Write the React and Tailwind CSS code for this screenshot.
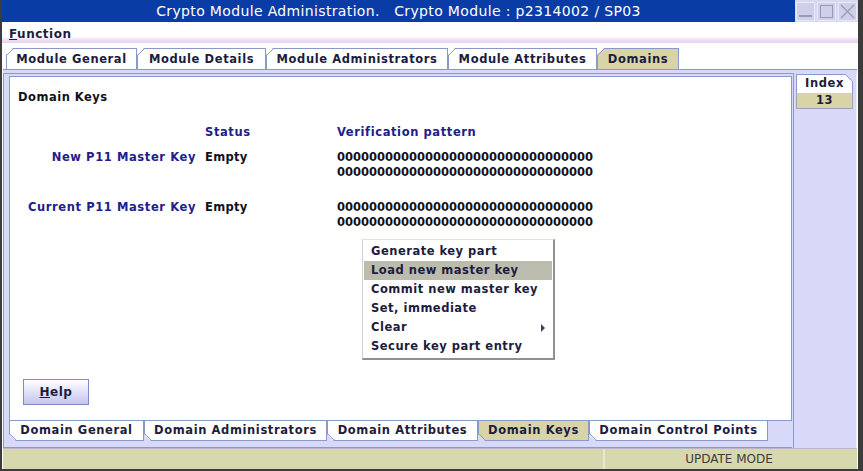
import React from "react";

const F = { fontFamily: '"DejaVu Sans", Verdana, sans-serif' };

function TopTab({ label, selected, w }) {
  return (
    <div
      className={`relative h-[21px] flex items-center justify-center border-t border-l border-r border-[#8a9ac8] text-[11.5px] font-bold tracking-[0.6px] text-[#1c1c3c] ${selected ? "bg-[#d8d4a8]" : "bg-white"}`}
      style={{ width: w }}
    >
      <svg className="absolute -left-px -top-px" width="8" height="8" viewBox="0 0 8 8">
        <polygon points="0,0 7,0 0,7" fill="#ffffff" />
        <line x1="0.5" y1="7.5" x2="7.5" y2="0.5" stroke="#8a9ac8" strokeWidth="1" />
      </svg>
      <span className="pt-px">{label}</span>
    </div>
  );
}

function BottomTab({ label, selected, w }) {
  return (
    <div
      className={`relative h-[20px] flex items-center justify-center border-b border-l border-r border-[#8a9ac8] text-[11.5px] font-bold tracking-[0.6px] text-[#1c1c3c] ${selected ? "bg-[#d8d4a8]" : "bg-white"}`}
      style={{ width: w }}
    >
      <svg className="absolute -left-px -bottom-px" width="8" height="8" viewBox="0 0 8 8">
        <polygon points="0,1 0,8 7,8" fill="#d8d8f8" />
        <line x1="0.5" y1="0.5" x2="7.5" y2="7.5" stroke="#8a9ac8" strokeWidth="1" />
      </svg>
      <span>{label}</span>
    </div>
  );
}

const ZEROS = "00000000000000000000000000000000";

export default function App() {
  return (
    <div
      className="w-[863px] h-[471px] flex flex-col bg-white border-l-2 border-b-2 border-r-[5px] border-[#3c3c3c] overflow-hidden"
      style={F}
    >
      {/* Title bar */}
      <div className="h-[22px] bg-[#0a3ca6] flex items-center shrink-0 relative">
        <div className="flex-1 text-center text-white text-[14px] tracking-[0.35px] leading-none whitespace-pre">
          {"Crypto Module Administration.   Crypto Module : p2314002 / SP03"}
        </div>
        <div className="flex h-[22px] bg-[#d8d8ee] items-center gap-[2px] px-[1px]">
          <div className="w-[19px] h-[19px] bg-[#cfcfea] border border-[#e8e8f8] relative">
            <div className="absolute left-[2px] right-[2px] bottom-[3px] h-[2px] bg-[#9a9ab8]" />
          </div>
          <div className="w-[19px] h-[19px] bg-[#cfcfea] border border-[#e8e8f8] relative">
            <div className="absolute inset-[2px] border border-[#9a9ab8]" />
          </div>
          <div className="w-[19px] h-[19px] bg-[#cfcfea] border border-[#e8e8f8] relative">
            <svg className="absolute inset-0" width="17" height="17" viewBox="0 0 17 17">
              <line x1="2" y1="2" x2="15" y2="15" stroke="#9a9ab8" strokeWidth="1.2" />
              <line x1="15" y1="2" x2="2" y2="15" stroke="#9a9ab8" strokeWidth="1.2" />
            </svg>
          </div>
        </div>
      </div>

      {/* Menu bar */}
      <div className="h-[21px] flex items-end pb-[2px] pl-[7px] text-[12px] font-bold tracking-[0.5px] text-[#1c1c3c] shrink-0 bg-[linear-gradient(to_bottom,#ffffff_0%,#ffffff_70%,#f2e4f6_82%,#e6d2f0_100%)]">
        <span className="leading-[14px]"><span className="underline">F</span>unction</span>
      </div>
      <div className="h-[5px] shrink-0" />

      {/* Top tabs */}
      <div className="flex pl-[4px] shrink-0 h-[21px] items-end">
        <TopTab label="Module General" w={131} />
        <TopTab label="Module Details" w={129} />
        <TopTab label="Module Administrators" w={182} />
        <TopTab label="Module Attributes" w={149} />
        <TopTab label="Domains" w={82} selected />
      </div>

      {/* Main container */}
      <div className="flex-1 flex flex-col bg-[#d8d8f8] border-t border-[#8a9ac8] ml-[1px] mr-[1px]">
        <div className="flex-1 flex border-t-[3px] border-[#d8d8f8]">
          {/* Left column */}
          <div className="flex-1 flex flex-col border-l border-[#8a9ac8] border-t border-r pl-[5px] pt-[2px] pr-[1px]">
            <div className="flex-1 bg-white border border-[#8a9ac8] relative text-[11.5px] font-bold">
              <div className="absolute left-[8px] top-[12px] text-[#101020] tracking-[0.5px]">Domain Keys</div>

              <div className="pt-[47px]">
                <div className="grid grid-cols-[186px_123px_1fr] gap-x-[9px] h-[14px] items-center tracking-[0.6px]">
                  <div />
                  <div className="text-[#20208a]">Status</div>
                  <div className="text-[#20208a]">Verification pattern</div>
                </div>
                <div className="grid grid-cols-[186px_123px_1fr] gap-x-[9px] mt-[12px] leading-[15px]">
                  <div className="text-right text-[#20208a] tracking-[0.6px]">New P11 Master Key</div>
                  <div className="text-[#101020] tracking-[0.3px]">Empty</div>
                  <div className="text-[#101020]">
                    <div>{ZEROS}</div>
                    <div>{ZEROS}</div>
                  </div>
                </div>
                <div className="grid grid-cols-[186px_123px_1fr] gap-x-[9px] mt-[20px] leading-[15px]">
                  <div className="text-right text-[#20208a] tracking-[0.6px]">Current P11 Master Key</div>
                  <div className="text-[#101020] tracking-[0.3px]">Empty</div>
                  <div className="text-[#101020]">
                    <div>{ZEROS}</div>
                    <div>{ZEROS}</div>
                  </div>
                </div>
              </div>

              {/* Popup menu */}
              <div className="absolute left-[352px] top-[162px] w-[193px] bg-white border-r-2 border-b-2 border-[#909090] border-l border-t border-l-[#d0d0d0] border-t-[#e0e0e0] py-[2px] text-[#1c1c3c] tracking-[0.5px]">
                {[
                  "Generate key part",
                  "Load new master key",
                  "Commit new master key",
                  "Set, immediate",
                  "Clear",
                  "Secure key part entry",
                ].map((t) => (
                  <div
                    key={t}
                    className={`h-[19px] flex items-center pl-[7px] mx-[1px] relative ${t === "Load new master key" ? "bg-[#bcbcae]" : ""}`}
                  >
                    {t}
                    {t === "Clear" && (
                      <svg className="absolute right-[6px] top-[6px]" width="5" height="8" viewBox="0 0 5 8">
                        <polygon points="0,0 4,4 0,8" fill="#404060" />
                      </svg>
                    )}
                  </div>
                ))}
              </div>

              {/* Help button */}
              <div className="absolute left-[13px] top-[302px] w-[66px] h-[26px] border border-[#7c8cc0] bg-gradient-to-b from-white to-[#c4c4ee] flex items-center justify-center text-[12px] tracking-[0.5px] text-[#1c1c3c]">
                <span><span className="underline">H</span>elp</span>
              </div>
            </div>

            {/* Bottom tabs */}
            <div className="flex h-[21px] shrink-0 pb-0">
              <BottomTab label="Domain General" w={135} />
              <BottomTab label="Domain Administrators" w={183} />
              <BottomTab label="Domain Attributes" w={151} />
              <BottomTab label="Domain Keys" w={111} selected />
              <BottomTab label="Domain Control Points" w={179} />
            </div>
            <div className="h-[6px] border-b border-[#8a9ac8] -ml-[6px]" />
          </div>

          {/* Right index column */}
          <div className="w-[63px] flex flex-col pl-[2px] pr-[3px] pt-[1px] border-r border-[#f0f0f8]">
            <div className="relative h-[19px] bg-white border-t border-l border-r border-[#8a9ac8] flex items-center justify-center text-[11.5px] font-bold tracking-[0.6px] text-[#1c1c3c]">
              Index
              <svg className="absolute -right-px -top-px" width="8" height="8" viewBox="0 0 8 8">
                <polygon points="0,0 8,0 8,8" fill="#d8d8f8" />
                <line x1="0.5" y1="0.5" x2="7.5" y2="7.5" stroke="#8a9ac8" strokeWidth="1" />
              </svg>
            </div>
            <div className="h-[16px] bg-[#d8d4a8] border-l border-r border-b border-[#a0a0b8] flex items-center justify-center text-[11.5px] font-bold tracking-[0.6px] text-[#1c1c3c]">
              13
            </div>
          </div>
        </div>

        {/* Status bar */}
        <div className="h-[21px] shrink-0 flex bg-[#d8d8ae] border-t border-[#b8b8c8]">
          <div className="w-[602px] border-r-2 border-[#e8e8d8]" />
          <div className="flex-1 flex items-center justify-center text-[12px] text-[#3c3c3c] pr-[4px]">
            UPDATE MODE
          </div>
        </div>
      </div>
    </div>
  );
}
